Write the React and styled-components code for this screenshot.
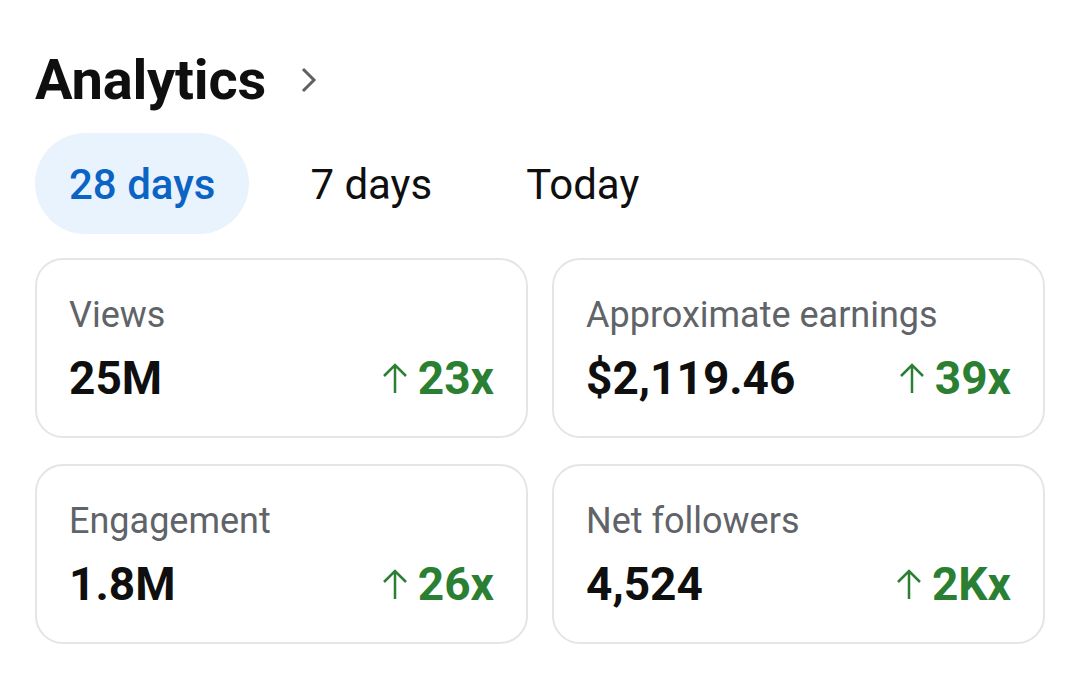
import React from 'react';
import styled, { createGlobalStyle } from 'styled-components';

const GlobalStyle = createGlobalStyle`
	html, body {
		margin: 0;
		padding: 0;
		background: #ffffff;
	}
	body {
		font-family: Roboto, 'Noto Sans', sans-serif;
		-webkit-font-smoothing: antialiased;
	}
`;

const Page = styled.div`
	width: 1080px;
	height: 691px;
	box-sizing: border-box;
	padding: 48px 35px 0 35px;
	background: #fff;
`;

const Header = styled.div`
	display: flex;
	align-items: center;
	gap: 34px;
	height: 64px;
`;

const Title = styled.h1`
	margin: 0;
	font-size: 56px;
	font-weight: 700;
	color: #0f0f0f;
	letter-spacing: -0.2px;
`;

const Tabs = styled.div`
	display: flex;
	align-items: center;
	margin-top: 21px;
`;

const Tab = styled.div`
	height: 101px;
	display: flex;
	align-items: center;
	padding: 2px ${(p) => (p.$active ? '34px' : '0')} 0;
	box-sizing: border-box;
	margin-right: ${(p) => (p.$active ? '61px' : '94px')};
	border-radius: 51px;
	font-size: 42px;
	font-weight: ${(p) => (p.$active ? 500 : 400)};
	color: ${(p) => (p.$active ? '#0b63c4' : '#0f0f0f')};
	background: ${(p) => (p.$active ? '#e8f3fd' : 'transparent')};
`;

const Grid = styled.div`
	display: grid;
	grid-template-columns: 1fr 1fr;
	column-gap: 24px;
	row-gap: 26px;
	margin-top: 24px;
`;

const Card = styled.div`
	height: 180px;
	box-sizing: border-box;
	border: 2.5px solid #e3e5e8;
	border-radius: 28px;
	padding: 2px 32px 0;
	display: flex;
	flex-direction: column;
	justify-content: center;
`;

const Label = styled.div`
	font-size: 36px;
	color: #606368;
	line-height: 40px;
`;

const Row = styled.div`
	display: flex;
	justify-content: space-between;
	align-items: center;
	margin-top: 18px;
`;

const Value = styled.div`
	font-size: 46px;
	font-weight: 700;
	color: #0f0f0f;
	line-height: 50px;
`;

const Change = styled.div`
	display: flex;
	align-items: center;
	gap: 10px;
	font-size: 46px;
	font-weight: 700;
	color: #2b7f33;
	line-height: 50px;
`;

const Chevron = () => (
	<svg width="18" height="28" viewBox="0 0 18 28">
		<path d="M3 3 L14 14 L3 25" fill="none" stroke="#606060" strokeWidth="3" />
	</svg>
);

const Arrow = () => (
	<svg width="26" height="32" viewBox="0 0 26 32">
		<path d="M13 31 V3 M2 14 L13 3 L24 14" fill="none" stroke="#2b7f33" strokeWidth="2.5" />
	</svg>
);

const stats = [
	{ label: 'Views', value: '25M', change: '23x' },
	{ label: 'Approximate earnings', value: '$2,119.46', change: '39x' },
	{ label: 'Engagement', value: '1.8M', change: '26x' },
	{ label: 'Net followers', value: '4,524', change: '2Kx' },
];

const App = () => {
	return (
		<Page>
			<GlobalStyle />
			<Header>
				<Title>Analytics</Title>
				<Chevron />
			</Header>
			<Tabs>
				<Tab $active>28 days</Tab>
				<Tab>7 days</Tab>
				<Tab>Today</Tab>
			</Tabs>
			<Grid>
				{stats.map((s) => (
					<Card key={s.label}>
						<Label>{s.label}</Label>
						<Row>
							<Value>{s.value}</Value>
							<Change>
								<Arrow />
								{s.change}
							</Change>
						</Row>
					</Card>
				))}
			</Grid>
		</Page>
	);
};

export default App;
